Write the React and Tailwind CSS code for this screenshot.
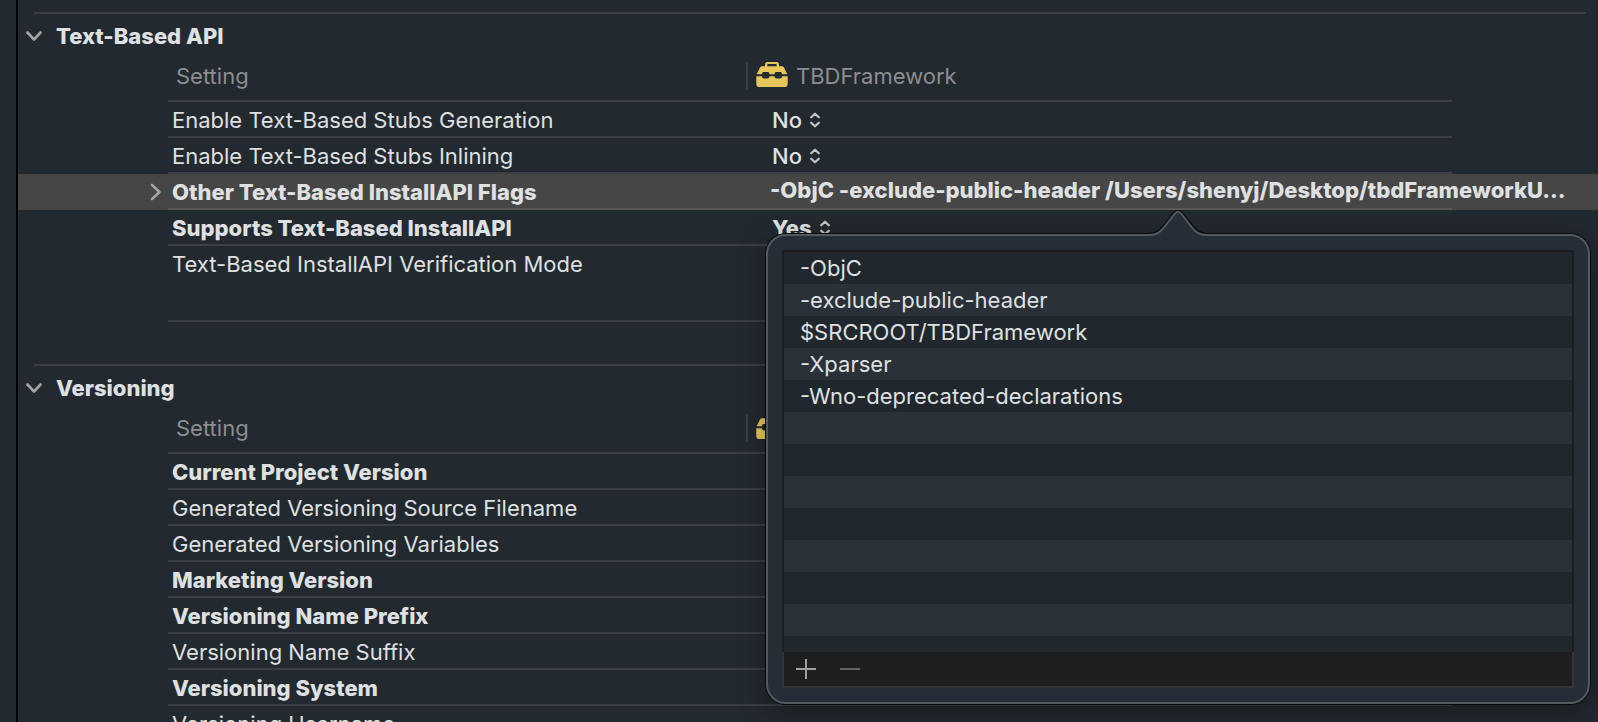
import React from "react";

const sections = [
  {
    title: "Text-Based API",
    rows: [
      { name: "Enable Text-Based Stubs Generation", choice: "No" },
      { name: "Enable Text-Based Stubs Inlining", choice: "No" },
      {
        name: "Other Text-Based InstallAPI Flags",
        bold: true,
        selected: true,
        text: "-ObjC -exclude-public-header /Users/shenyj/Desktop/tbdFrameworkU...",
      },
      { name: "Supports Text-Based InstallAPI", bold: true, choice: "Yes" },
      { name: "Text-Based InstallAPI Verification Mode", tall: true },
    ],
  },
  {
    title: "Versioning",
    rows: [
      { name: "Current Project Version", bold: true },
      { name: "Generated Versioning Source Filename" },
      { name: "Generated Versioning Variables" },
      { name: "Marketing Version", bold: true },
      { name: "Versioning Name Prefix", bold: true },
      { name: "Versioning Name Suffix" },
      { name: "Versioning System", bold: true },
      { name: "Versioning Username" },
    ],
  },
];

const flags = [
  "-ObjC",
  "-exclude-public-header",
  "$SRCROOT/TBDFramework",
  "-Xparser",
  "-Wno-deprecated-declarations",
  "", "", "", "", "", "", "", "",
];

function Toolbox() {
  return (
    <svg width="32" height="26" viewBox="0 0 32 26" fill="#e8c75a" aria-hidden="true" className="shrink-0 self-start">
      <path
        fillRule="evenodd"
        d="M9 4.200V2.500C9 1 9.800 0 11.500 0h9C22.200 0 23 1 23 2.500v1.700h2.600c1.400 0 2.100.5 2.600 1.700L31.300 12.200H26c0-1.600-.7-2.200-1.900-2.200h-3.600c-1.200 0-1.900.6-1.900 2.200h-5.200c0-1.600-.7-2.200-1.900-2.200H7.900C6.700 10 6 10.600 6 12.200H.7L3.800 5.900c.5-1.200 1.200-1.700 2.600-1.700H9Zm2.300 0h9.400V2.700c0-.4-.2-.6-.6-.6h-8.200c-.4 0-.6.2-.6.6v1.500Z"
      />
      <path d="M.3 14.200H6c0 1.600.7 2.200 1.900 2.200h3.600c1.200 0 1.900-.6 1.900-2.200h5.200c0 1.600.7 2.200 1.900 2.200h3.600c1.200 0 1.900-.6 1.900-2.200h5.700v7.800c0 2.100-1.100 3.100-3.200 3.100h-25C1.400 25.100.3 24.100.3 22Z" />
    </svg>
  );
}

function UpDown() {
  return (
    <svg width="10" height="16" viewBox="0 0 10 16" fill="none" stroke="#c3c5c7" strokeWidth="2.200" strokeLinecap="round" strokeLinejoin="round" aria-hidden="true">
      <path d="M1.200 5.300 5 1.700l3.800 3.600M1.200 10.700 5 14.300l3.800-3.600" />
    </svg>
  );
}

function Row({ row }) {
  const rule = row.selected ? "border-[#58585a]" : "border-[#3a3e46]";
  return (
    <tr className={`${row.tall ? "h-19" : "h-9"} ${row.selected ? "bg-[#464646]" : ""}`}>
      <td className="p-0">
        {row.selected && (
          <button type="button" aria-label="Expand setting" className="mr-1.5 ml-auto flex">
            <svg width="12" height="18" viewBox="0 0 12 18" fill="none" stroke="#a2a3a4" strokeWidth="2.600" strokeLinecap="round" strokeLinejoin="round" aria-hidden="true">
              <path d="m2 2 7.500 7L2 16" />
            </svg>
          </button>
        )}
      </td>
      <th scope="row" className={`border-b-2 p-0 pt-0.5 pl-1 text-left align-top leading-8 ${rule} ${row.bold ? "font-extrabold" : "font-normal"}`}>
        {row.name}
      </th>
      <td className={`border-b-2 p-0 pl-6 align-top whitespace-nowrap ${rule}`}>
        {row.choice && (
          <div className={`flex items-center gap-2 pt-0.5 pl-0.5 ${row.bold ? "font-extrabold" : "font-medium"}`}>
            <select aria-label={row.name} defaultValue={row.choice} className="h-8 appearance-none bg-transparent leading-8 outline-none [field-sizing:content]">
              <option>Yes</option>
              <option>No</option>
            </select>
            <UpDown />
          </div>
        )}
        {row.text && <div className="w-0 leading-8 font-extrabold">{row.text}</div>}
      </td>
      <td className="p-0" />
    </tr>
  );
}

function Section({ section }) {
  return (
    <section>
      <div className="mr-3 ml-4 border-t-2 border-[#3a3e46]" />
      <h2 className="flex h-11 items-center font-extrabold">
        <button type="button" className="flex items-center gap-3.5 pl-2">
          <svg width="16" height="12" viewBox="0 0 16 12" fill="none" stroke="#a2a5a8" strokeWidth="2.600" strokeLinecap="round" strokeLinejoin="round" aria-hidden="true">
            <path d="m1.500 2.500 6.500 7 6.500-7" />
          </svg>
          {section.title}
        </button>
      </h2>
      <table className="w-full table-fixed border-separate border-spacing-0">
        <colgroup>
          <col className="w-[150px]" />
          <col className="w-[578px]" />
          <col />
          <col className="w-[146px]" />
        </colgroup>
        <thead>
          <tr className="h-11 text-[#8c8e90]">
            <td className="p-0" />
            <th scope="col" className="border-b-2 border-[#3a3e46] p-0 pb-1.5 pl-2 text-left font-normal">Setting</th>
            <th scope="col" className="border-b-2 border-[#3a3e46] p-0 pb-1.5 text-left font-normal">
              <div className="flex h-7 items-center gap-2 border-l-2 border-[#3a3e46] pl-2">
                <Toolbox />
                TBDFramework
              </div>
            </th>
            <td className="p-0" />
          </tr>
        </thead>
        <tbody>
          {section.rows.map((row) => (
            <Row key={row.name} row={row} />
          ))}
        </tbody>
      </table>
    </section>
  );
}

function FlagsPopover() {
  return (
    <div role="dialog" aria-label="Other Text-Based InstallAPI Flags" className="absolute top-[234px] right-2 left-[766px] rounded-[20px] border-2 border-[#525a60] bg-[#252e36] p-3.5 shadow-[0_0_0_1px_#06090b,0_8px_28px_rgba(0,0,0,0.35)]">
      <svg width="60" height="28" viewBox="0 0 60 28" fill="none" aria-hidden="true" className="absolute -top-[26px] left-1/2 -translate-x-1/2">
        <path d="M0 26C9 26 12 23 16 18L27 4Q30 1 33 4L44 18C48 23 51 26 60 26V28H0Z" fill="#252e36" />
        <path d="M0 23.500C8 23.500 11 21 15 16L26.300 2Q30-1.800 33.700 2L45 16C49 21 52 23.500 60 23.500" stroke="#06090b" strokeWidth="1.200" />
        <path d="M0 25C9 25 12 22.500 16 17.500L27 3.500Q30 .2 33 3.500L44 17.500C48 22.500 51 25 60 25" stroke="#525a60" strokeWidth="2" />
      </svg>
      <ul className="h-[402px] overflow-hidden border-2 border-b-0 border-[#1b1d1f]">
        {flags.map((flag, i) => (
          <li key={i} className="h-8 bg-[#20272d] pl-4 leading-8 even:bg-[#2a3138]">{flag}</li>
        ))}
      </ul>
      <div className="flex h-9 items-center gap-6 border-2 border-t-0 border-[#343434] bg-[#1e1e1e] pl-3">
        <button type="button" aria-label="Add flag">
          <svg width="20" height="20" viewBox="0 0 20 20" stroke="#a0a0a0" strokeWidth="2" aria-hidden="true" className="block">
            <path d="M10 0v20M0 10h20" />
          </svg>
        </button>
        <button type="button" aria-label="Remove flag">
          <svg width="20" height="20" viewBox="0 0 20 20" stroke="#646464" strokeWidth="2" aria-hidden="true" className="block">
            <path d="M0 10h20" />
          </svg>
        </button>
      </div>
    </div>
  );
}

export default function App() {
  return (
    <div className="relative flex h-screen overflow-hidden bg-[#22292f] font-['Inter',sans-serif] text-[22px] leading-7 text-[#dfe0e1]">
      <aside className="w-[18px] shrink-0 border-r-2 border-black" />
      <main className="flex min-w-0 flex-1 flex-col gap-[42px] pt-3">
        {sections.map((section) => (
          <Section key={section.title} section={section} />
        ))}
      </main>
      <FlagsPopover />
    </div>
  );
}
